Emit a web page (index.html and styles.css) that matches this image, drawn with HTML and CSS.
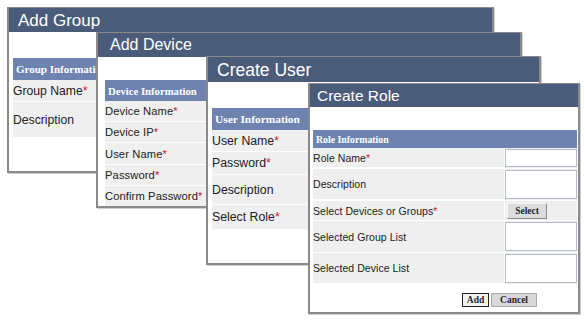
FILE: index.html
```html
<!DOCTYPE html>
<html lang="en">
<head>
    <meta charset="UTF-8">
    <title>Dialogs</title>
    <link rel="stylesheet" href="styles.css">
</head>
<body>
    <div class="desk">
        <div class="win win-group">
            <div class="win-title">Add Group</div>
            <div class="win-body">
                <div class="section">Group Information</div>
                <div class="row r22">Group Name<em>*</em></div>
                <div class="row r36">Description</div>
            </div>
        </div>

        <div class="win win-device">
            <div class="win-title">Add Device</div>
            <div class="win-body">
                <div class="section">Device Information</div>
                <div class="row r21">Device Name<em>*</em></div>
                <div class="row r21">Device IP<em>*</em></div>
                <div class="row r22">User Name<em>*</em></div>
                <div class="row r21">Password<em>*</em></div>
                <div class="row r21">Confirm Password<em>*</em></div>
            </div>
        </div>

        <div class="win win-user">
            <div class="win-title">Create User</div>
            <div class="win-body">
                <div class="section">User Information</div>
                <div class="row r22">User Name<em>*</em></div>
                <div class="row r23">Password<em>*</em></div>
                <div class="row r30">Description</div>
                <div class="row r25">Select Role<em>*</em></div>
            </div>
        </div>

        <div class="win win-role">
            <div class="win-title">Create Role</div>
            <div class="win-body">
                <div class="section">Role Information</div>
                <div class="grid">
                    <div class="cell r20">Role Name<em>*</em></div>
                    <div class="field"><input type="text" class="box"></div>
                    <div class="cell r31">Description</div>
                    <div class="field"><input type="text" class="box tall"></div>
                    <div class="cell r20">Select Devices or Groups<em>*</em></div>
                    <div class="field"><button class="btn btn-select">Select</button></div>
                    <div class="cell r32">Selected Group List</div>
                    <div class="field"><input type="text" class="box tall"></div>
                    <div class="cell r31">Selected Device List</div>
                    <div class="field"><input type="text" class="box tall"></div>
                </div>
                <div class="actions">
                    <button class="btn btn-add">Add</button>
                    <button class="btn btn-cancel">Cancel</button>
                </div>
            </div>
        </div>
    </div>
</body>
</html>
```

FILE: styles.css
```css
body {
    margin: 0;
    background: #fff;
    font-family: "Liberation Sans", Arial, sans-serif;
    color: #222;
}

.desk {
    position: relative;
    width: 584px;
    height: 320px;
    overflow: hidden;
}

/* each dialog sits on the canvas at its own spot */
.win {
    position: absolute;
    box-sizing: border-box;
    background: #fff;
    border: 2px solid #8a8a8a;
    border-top-width: 1px;
    box-shadow: 1px 1px 0 #cfcfcf;
    overflow: hidden;
}

.win-title {
    background-color: #4b5c7b;
    color: #fff;
    box-sizing: border-box;
    white-space: nowrap;
}

.section {
    background-color: #6e83b0;
    color: #fff;
    font-family: "Liberation Serif", "Times New Roman", serif;
    font-weight: bold;
    white-space: nowrap;
    display: flex;
    align-items: center;
    padding-left: 3px;
}

.row,
.cell {
    background: #efefef;
    border-bottom: 1px solid #fff;
    box-sizing: border-box;
    display: flex;
    align-items: center;
    white-space: nowrap;
}

em {
    font-style: normal;
    color: #c8242c;
}

.r20 { height: 20px; }
.r21 { height: 21px; }
.r22 { height: 22px; }
.r23 { height: 23px; }
.r25 { height: 25px; }
.r30 { height: 30px; }
.r31 { height: 31px; }
.r32 { height: 32px; }
.r36 { height: 36px; }

/* Add Group */
.win-group {
    left: 7px;
    top: 7px;
    width: 487px;
    height: 166px;
}

.win-group .win-title {
    height: 24px;
    font-size: 17px;
    padding: 3px 0 0 9px;
}

.win-group .win-body {
    padding: 26px 0 0 4px;
}

.win-group .section {
    height: 22px;
    font-size: 11px;
}

.win-group .row {
    font-size: 12.2px;
}

/* Add Device */
.win-device {
    left: 96px;
    top: 32px;
    width: 426px;
    height: 176px;
}

.win-device .win-title {
    height: 24px;
    font-size: 16px;
    padding: 3px 0 0 12px;
}

.win-device .win-body {
    padding: 23px 0 0 7px;
}

.win-device .section {
    height: 21px;
    font-size: 10.7px;
}

.win-device .row {
    font-size: 11.2px;
    letter-spacing: 0.1px;
}

/* Create User */
.win-user {
    left: 206px;
    top: 56px;
    width: 335px;
    height: 209px;
}

.win-user .win-title {
    height: 25px;
    font-size: 17.5px;
    padding: 3px 0 0 9px;
}

.win-user .win-body {
    padding: 26px 0 0 4px;
}

.win-user .section {
    height: 22px;
    font-size: 11.4px;
}

.win-user .row {
    font-size: 12.3px;
}

/* Create Role */
.win-role {
    left: 308px;
    top: 83px;
    width: 272px;
    height: 231px;
}

.win-role .win-title {
    height: 23px;
    font-size: 15.5px;
    padding: 3px 0 0 7px;
}

.win-role .win-body {
    padding: 23px 1px 0 3px;
}

.win-role .section {
    height: 18px;
    font-size: 9.8px;
}

.grid {
    display: grid;
    grid-template-columns: 1fr 72px;
    column-gap: 1px;
}

.cell {
    font-size: 10.5px;
    letter-spacing: 0.05px;
}

.field {
    background: #efefef;
    border-bottom: 1px solid #fff;
    display: flex;
    align-items: center;
    box-sizing: border-box;
}

.box {
    box-sizing: border-box;
    width: 100%;
    height: 18px;
    margin: 1px 0;
    border: 1px solid #b4bccb;
    background: #fff;
    padding: 0;
}

.box.tall {
    height: 29px;
}

.btn {
    font-family: "Liberation Serif", "Times New Roman", serif;
    font-weight: bold;
    font-size: 9.5px;
    color: #1c2430;
    padding: 0;
    cursor: pointer;
}

.btn-select {
    width: 40px;
    height: 16px;
    margin-left: 2px;
    background: #dcdcdc;
    border: 1px solid #a0a0a0;
    border-color: #f4f4f4 #8c8c8c #8c8c8c #f4f4f4;
}

.actions {
    display: flex;
    justify-content: flex-end;
    gap: 2px;
    padding: 8px 40px 0 0;
}

.btn-add {
    width: 27px;
    height: 14px;
    background: #f2f2f2;
    border: 1px solid #222;
}

.btn-cancel {
    width: 46px;
    height: 14px;
    background: #d9d9d9;
    border: 1px solid #a8a8a8;
}
```
